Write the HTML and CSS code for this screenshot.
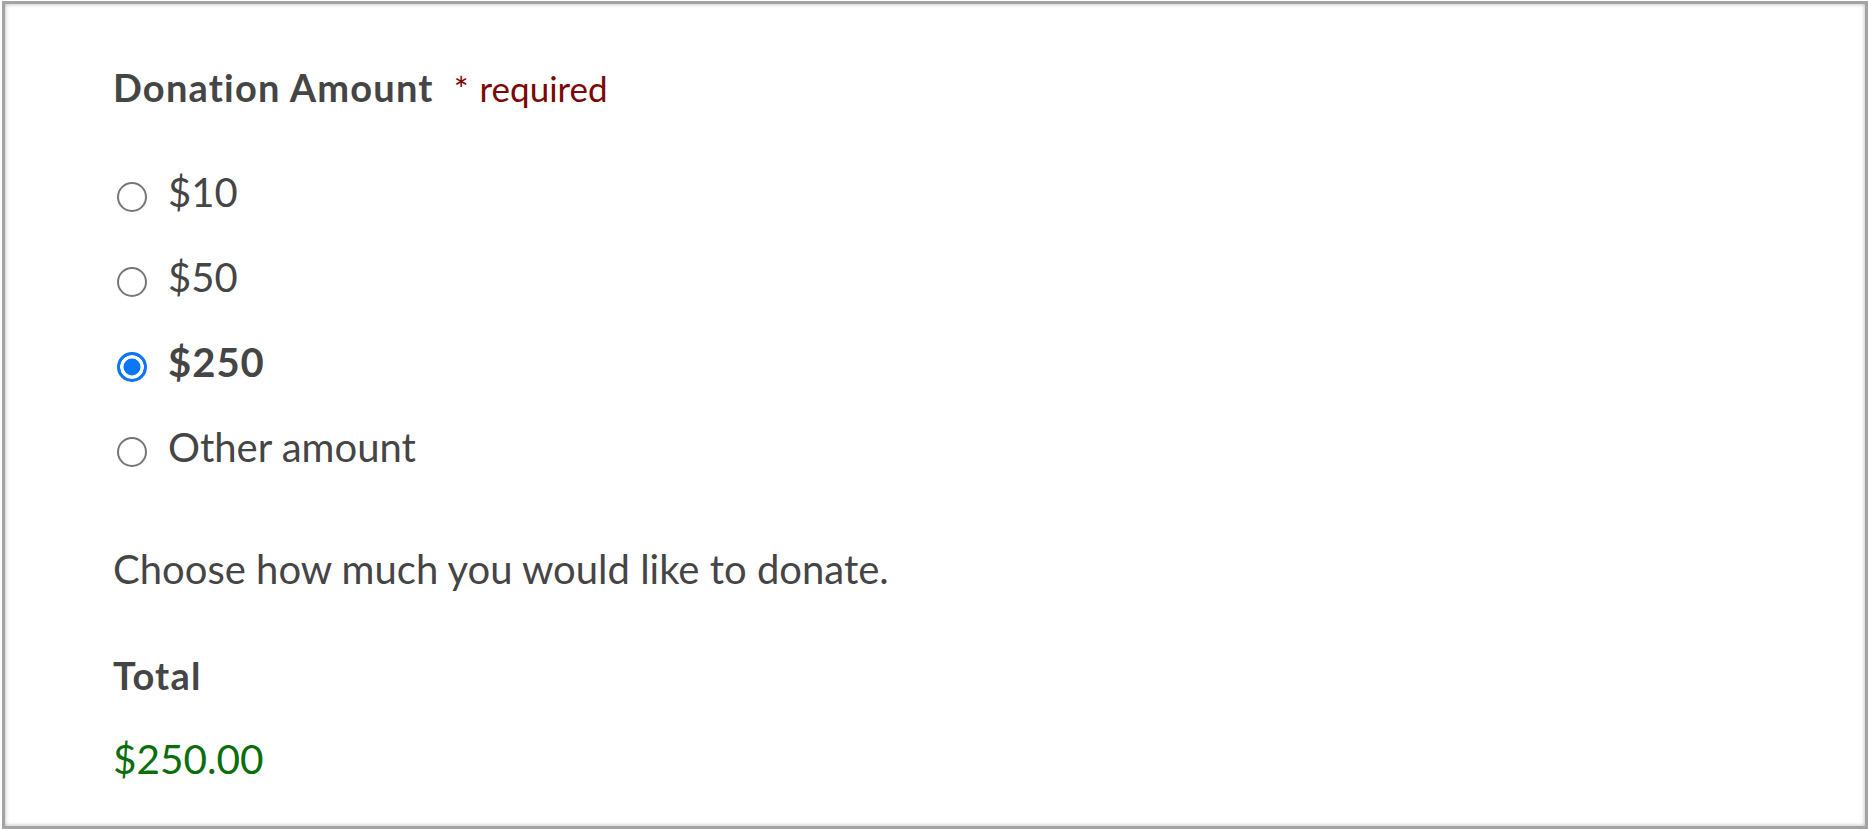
FILE: index.html
```html
<!DOCTYPE html>
<html lang="en">
<head>
<meta charset="utf-8">
<title>Donation Amount</title>
<link rel="stylesheet" href="styles.css">
</head>
<body>
<div class="frame">
  <div class="field">
    <div class="label">Donation Amount<span class="req"><span class="star">*</span> required</span></div>
    <div class="options">
      <label class="option"><span class="radio"></span><span class="opt-text">$10</span></label>
      <label class="option"><span class="radio"></span><span class="opt-text">$50</span></label>
      <label class="option"><span class="radio checked"></span><span class="opt-text bold">$250</span></label>
      <label class="option"><span class="radio"></span><span class="opt-text">Other amount</span></label>
    </div>
    <p class="help">Choose how much you would like to donate.</p>
    <div class="total-label">Total</div>
    <div class="total">$250.00</div>
  </div>
</div>
</body>
</html>
```
FILE: styles.css
```css
html, body {
  margin: 0;
  padding: 0;
  background: #ffffff;
  overflow: hidden;
}
body {
  font-family: "Lato", "Liberation Sans", sans-serif;
  color: #454545;
}
.frame {
  box-sizing: border-box;
  width: 1866px;
  height: 828px;
  margin: 1px 0 0 2px;
  border: 3.5px solid #a3a3a3;
  box-shadow: inset 0 0 4px rgba(0, 0, 0, 0.3);
  background: #ffffff;
  padding: 61px 0 0 108px;
}
.field {
  display: flex;
  flex-direction: column;
  align-items: flex-start;
}
.label {
  font-size: 38px;
  line-height: 44px;
  font-weight: 700;
  letter-spacing: 1.2px;
  color: #454545;
}
.req {
  font-size: 35px;
  line-height: 1;
  font-weight: 400;
  letter-spacing: 0;
  color: #7d0606;
  margin-left: 20px;
}
.star {
  margin-right: 2px;
}
.options {
  margin-top: 41px;
  display: flex;
  flex-direction: column;
}
.option {
  display: flex;
  align-items: flex-start;
  height: 85px;
}
.radio {
  box-sizing: border-box;
  width: 30px;
  height: 30px;
  margin: 32px 0 0 4px;
  border-radius: 50%;
  border: 2.5px solid #767676;
  background: #ffffff;
  flex: none;
}
.radio.checked {
  border: 3.5px solid #0b76f6;
  background: #0b76f6;
  box-shadow: inset 0 0 0 3.5px #ffffff;
}
.opt-text {
  font-size: 40px;
  line-height: 85px;
  margin-left: 21px;
  color: #454545;
}
.opt-text.bold {
  font-weight: 700;
  letter-spacing: 1px;
}
.help {
  margin: 55px 0 0 0;
  font-size: 40px;
  line-height: 49px;
  color: #454545;
}
.total-label {
  margin-top: 59px;
  font-size: 38px;
  line-height: 44px;
  font-weight: 700;
  letter-spacing: 1.2px;
  color: #454545;
}
.total {
  margin-top: 37px;
  font-size: 40.5px;
  line-height: 49px;
  color: #0a6e0a;
}
```
